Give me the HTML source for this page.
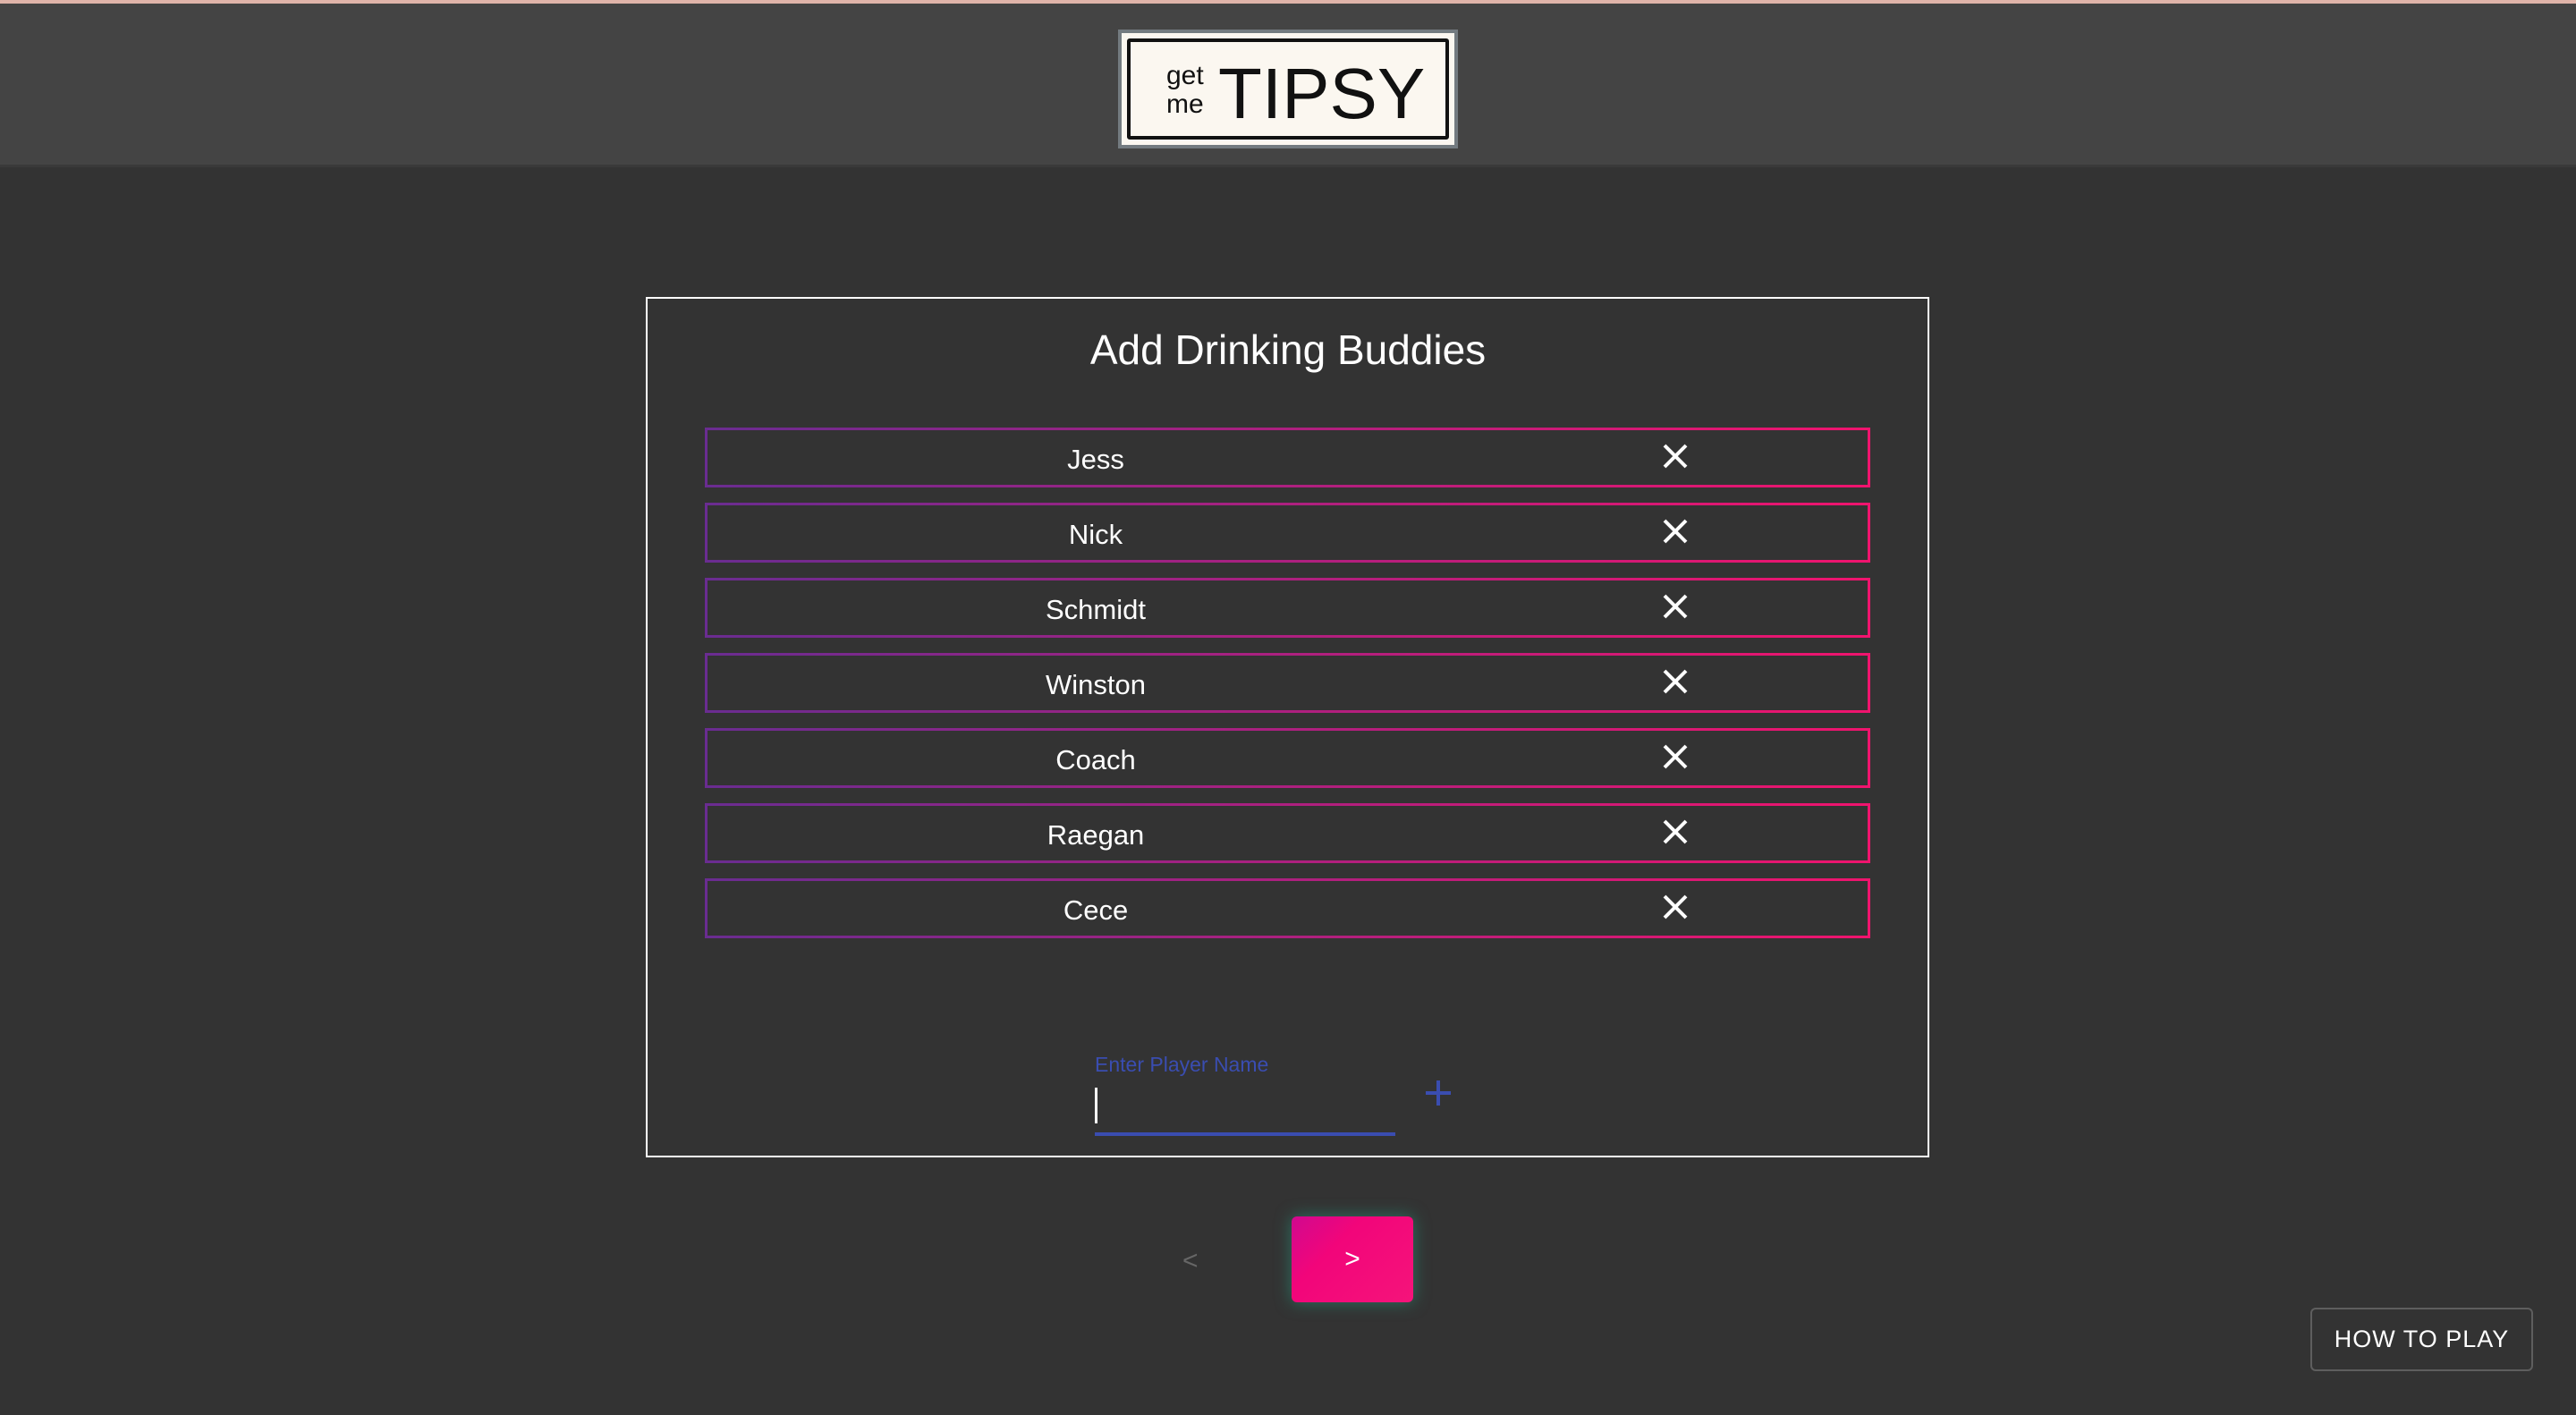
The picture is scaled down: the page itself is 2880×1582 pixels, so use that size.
<!DOCTYPE html>
<html><head><style>
*{margin:0;padding:0;box-sizing:border-box}
html,body{width:2880px;height:1582px;background:#333;overflow:hidden;font-family:"Liberation Sans",sans-serif;color:#fff}
.hdr{position:absolute;left:0;top:0;width:2880px;height:187px;background:#444;border-top:4px solid #e0b4aa;border-bottom:3px solid #3a3a3a}
.logo{position:absolute;left:1250px;top:29px;width:380px;height:133px;background:#fbf7f0;border:4px solid #737b80}
.logo .in{position:absolute;left:6px;top:6px;right:6px;bottom:6px;border:4px solid #111;border-radius:3px}
.gm{position:absolute;left:40px;top:22px;font-size:30px;line-height:32px;color:#111}
.tp{position:absolute;left:98px;top:8px;font-size:80px;color:#111;letter-spacing:0px;line-height:100px;font-weight:normal}
.card{position:absolute;left:722px;top:332px;width:1435px;height:962px;border:2px solid #fff}
.title{position:absolute;left:0;width:100%;top:364px;text-align:center;font-size:46px}
.row{position:absolute;left:788px;width:1303px;height:67px;border:3px solid;border-image:linear-gradient(90deg,#6a2c91,#f0146e) 1}
.row span{position:absolute;left:0;width:868px;text-align:center;top:15px;font-size:31px}
.row svg{position:absolute;left:1067px;top:14px}
.lbl{position:absolute;left:1224px;top:1177px;font-size:23px;color:#3a4db0}
.cur{position:absolute;left:1224px;top:1216px;width:3px;height:40px;background:#fff}
.ul{position:absolute;left:1224px;top:1266px;width:336px;height:4px;background:#3a4db0}
.plus{position:absolute;left:1593px;top:1207px}
.prev{position:absolute;left:1322px;top:1393px;font-size:30px;color:#666}
.next{position:absolute;left:1444px;top:1360px;width:136px;height:96px;border-radius:6px;background:linear-gradient(135deg,#d0098f,#f2057a 35%,#f5147a);box-shadow:0 0 18px rgba(40,130,110,0.8);text-align:center;line-height:96px;font-size:30px}
.how{position:absolute;left:2583px;top:1462px;width:249px;height:71px;border:2px solid #5e5e5e;border-radius:6px;text-align:center;line-height:67px;font-size:27px;letter-spacing:1px}
</style></head><body>
<div class="hdr"><div class="logo"><div class="in"><div class="gm">get<br>me</div><div class="tp">TIPSY</div></div></div></div>
<div class="card"></div>
<div class="title">Add Drinking Buddies</div>
<div class="row" style="top:478px"><span>Jess</span><svg width="30" height="30"><path d="M3 3L27 27M27 3L3 27" stroke="#fff" stroke-width="4"/></svg></div>
<div class="row" style="top:562px"><span>Nick</span><svg width="30" height="30"><path d="M3 3L27 27M27 3L3 27" stroke="#fff" stroke-width="4"/></svg></div>
<div class="row" style="top:646px"><span>Schmidt</span><svg width="30" height="30"><path d="M3 3L27 27M27 3L3 27" stroke="#fff" stroke-width="4"/></svg></div>
<div class="row" style="top:730px"><span>Winston</span><svg width="30" height="30"><path d="M3 3L27 27M27 3L3 27" stroke="#fff" stroke-width="4"/></svg></div>
<div class="row" style="top:814px"><span>Coach</span><svg width="30" height="30"><path d="M3 3L27 27M27 3L3 27" stroke="#fff" stroke-width="4"/></svg></div>
<div class="row" style="top:898px"><span>Raegan</span><svg width="30" height="30"><path d="M3 3L27 27M27 3L3 27" stroke="#fff" stroke-width="4"/></svg></div>
<div class="row" style="top:982px"><span>Cece</span><svg width="30" height="30"><path d="M3 3L27 27M27 3L3 27" stroke="#fff" stroke-width="4"/></svg></div>
<div class="lbl">Enter Player Name</div>
<div class="cur"></div><div class="ul"></div>
<svg class="plus" width="30" height="30"><path d="M15 1V29M1 15H29" stroke="#3a4db0" stroke-width="4"/></svg>
<div class="prev">&lt;</div>
<div class="next">&gt;</div>
<div class="how">HOW TO PLAY</div>
</body></html>
